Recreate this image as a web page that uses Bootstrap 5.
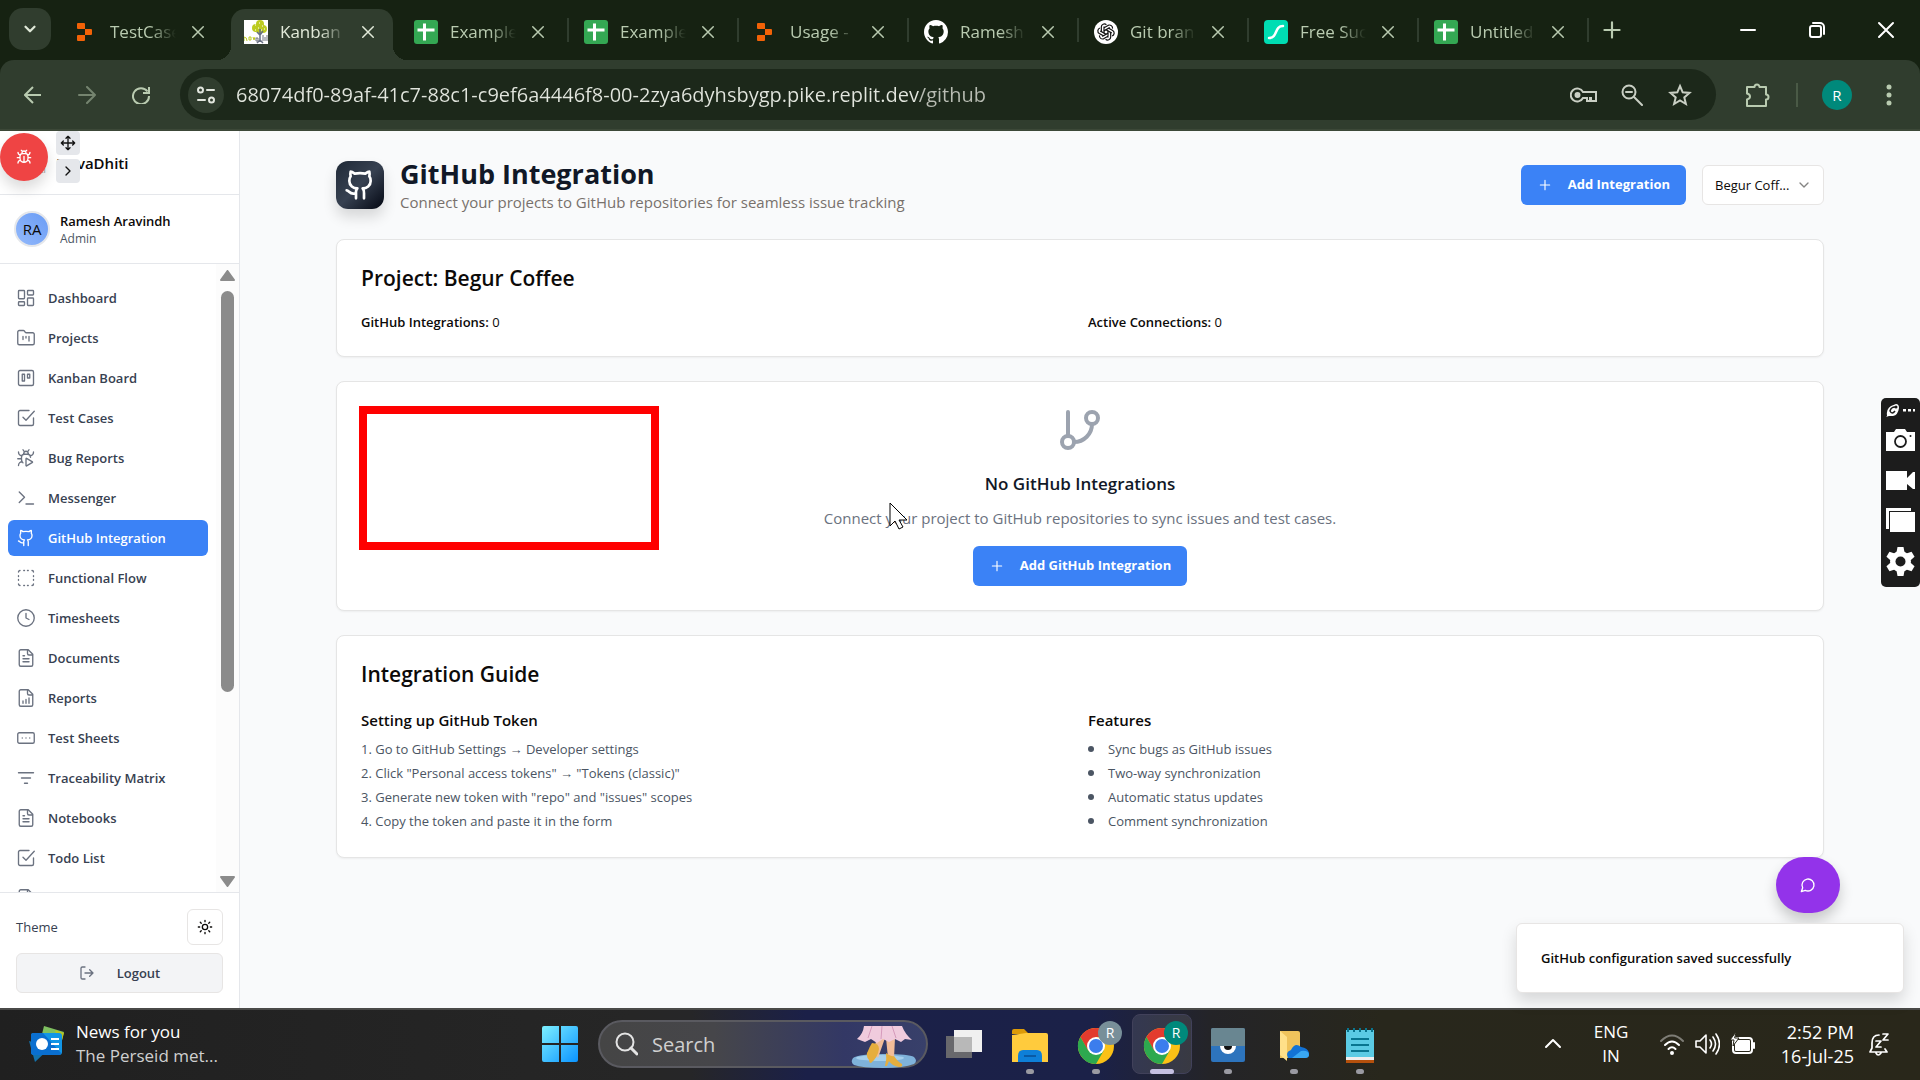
<!DOCTYPE html>
<html lang="en">
<head>
<meta charset="utf-8">
<meta name="viewport" content="width=device-width, initial-scale=1">
<title>GitHub Integration</title>
<link href="https://cdn.jsdelivr.net/npm/bootstrap@5.3.0/dist/css/bootstrap.min.css" rel="stylesheet">
<style>
body{font-family:"Open Sans","Noto Sans",sans-serif;font-size:13px;line-height:20px;color:#0c0a09;background:#f9fafb;overflow:hidden}
a{text-decoration:none;color:inherit}
.ico{width:18px;height:18px;fill:none;stroke:currentColor;stroke-width:2;stroke-linecap:round;stroke-linejoin:round;flex:none;display:block}
.ico-14{width:14px;height:14px}.ico-16{width:16px;height:16px}
.thin{stroke-width:1.7}
.plain{background:none;border:0;padding:0;color:inherit;display:flex;align-items:center;justify-content:center;flex:none}
/* browser frame */
.strip{height:60px;background:#162212;color:#b9cbb0;padding-left:9px}
.tabdrop{width:42px;height:42px;border-radius:14px;background:#303d2e;color:#dfe8d8;margin-right:10px}
.tabitem{width:162px;height:51px;margin:9px 8px 0 0;padding:0 10px 6px 13px;gap:12px;position:relative;font-size:17px}
.tabitem .fav{width:24px;height:24px;flex:none}
.tabitem .ttl{width:66px;flex:none;white-space:nowrap;overflow:hidden;-webkit-mask-image:linear-gradient(90deg,#000 60%,transparent);mask-image:linear-gradient(90deg,#000 60%,transparent);line-height:26px}
.tabitem .plain{margin-left:1px}
.tabitem.on{background:#303d2e;border-radius:14px 14px 0 0;color:#e2ead9}
.tabitem.on::before,.tabitem.on::after{content:"";position:absolute;bottom:0;width:14px;height:14px}
.tabitem.on::before{left:-14px;background:radial-gradient(circle at 0 0,transparent 14px,#303d2e 14px)}
.tabitem.on::after{right:-14px;background:radial-gradient(circle at 100% 0,transparent 14px,#303d2e 14px)}
.tabitem.sep::after{content:"";position:absolute;right:-6px;top:9px;width:2px;height:24px;background:#303d2e}
.winbtn{width:69px;height:60px;color:#fff}
.toolrow{height:71px;background:#303d2e;color:#b9cbb0;border-bottom:2px solid #3c4838;border-radius:14px 14px 0 0;padding:0 6px}
.toolwrap{background:#162212}
.navbtn{width:54px;height:40px}
.omni{height:51px;border-radius:26px;background:#1c281a;padding:0 12px 0 8px;margin-left:12px;color:#c9cfc4}
.omni .site{width:36px;height:36px;border-radius:50%;background:#303d2e;color:#e2e6de}
.omni input{border:0;outline:0;font-size:20px;height:36px;padding:0;color:transparent;background:linear-gradient(90deg,#e2e6de 0 683px,#b9bdb4 683px);-webkit-background-clip:text;background-clip:text}
.who{width:30px;height:30px;border-radius:50%;background:#00897b;color:#fff;font-size:15px}
/* sidebar */
.side{width:240px;background:#fff;border-right:1px solid #e5e7eb;position:relative}
.brand{height:64px;flex:none;border-bottom:1px solid #e5e7eb;padding-left:56px;font-size:15px;font-weight:600}
.person{height:69px;flex:none;border-bottom:1px solid #e5e7eb;padding:0 14px;gap:10px}
.face{width:36px;height:36px;border-radius:50%;border:2px solid #e5e7eb;background:linear-gradient(45deg,#93b9fb,#6a9cf5);font-size:15px}
.menu{padding:16px 8px 0;gap:4px}
.menu a{height:36px;padding:0 9px;gap:13px;border-radius:6px;color:#374151;font-weight:600;flex:none}
.menu a .ico{color:#6b7280;stroke-width:1.8}
.menu a.on,.menu a.on .ico{background:#3b82f6;color:#fff}
.track{width:23px;background:#fcfcfc;padding:11px 0 10px}
.thumb{width:13px;height:401px;border-radius:7px;background:#8b8b8b;margin-top:10px}
.foot{height:116px;flex:none;border-top:1px solid #e5e7eb;padding:16px}
.sunbtn{width:36px;height:36px;border:1px solid #e7e5e4;border-radius:6px;background:#fff;color:#0c0a09}
.outbtn{height:40px;border:1px solid #e7e5e4;border-radius:6px;background:#f3f4f6;color:#374151;gap:22px;font-weight:600}
.outbtn .ico{color:#6b7280}
.bugbtn{position:absolute;left:0;top:2px;width:48px;height:48px;border-radius:50%;background:#ef4444;color:#fff;box-shadow:0 8px 14px rgba(0,0,0,.14);z-index:3}
.floatbtns{position:absolute;left:56px;top:0;gap:4px;z-index:3}
.floatbtns button{width:24px;height:24px;border-radius:4px;background:#e5e7eb;color:#111}
.logomini{position:absolute;left:38px;top:32px;font-size:9px;line-height:14px;color:#999}
/* main column */
.wrapc{max-width:1536px;padding:26px 24px 0;margin:0 auto}
.headrow{margin-bottom:26px}
.headicon{width:48px;height:48px;border-radius:12px;background:linear-gradient(135deg,#1f2937,#374151 50%,#030712);color:#fff;box-shadow:0 8px 14px rgba(0,0,0,.14)}
h1{font-size:27px;line-height:34px;font-weight:700;color:#111827;margin:0}
.sub{font-size:15px;line-height:24px;color:#78716c;margin:0}
.headrow .sub{line-height:22px}
.btn-blue{height:40px;border:0;border-radius:6px;background:#3b82f6;color:#fff;font-size:13px;font-weight:700;padding:0 16px;gap:15px}
.btn-blue:hover{background:#3b82f6;color:#fff}
.pick{width:122px;position:relative}
.pick select{width:100%;height:40px;border:1px solid #e7e5e4;border-radius:6px;background:#fff;padding:0 12px;font-size:13px;appearance:none;color:#0c0a09}
.pick .ico{position:absolute;right:12px;top:12px;color:#858483}
.panel{background:#fff;border:1px solid #e5e5e5;border-radius:8px;padding:24px;box-shadow:0 1px 2px rgba(0,0,0,.05);position:relative}
h2{font-size:21px;line-height:28px;font-weight:600;margin:0}
h3{font-size:15px;line-height:24px;font-weight:600;margin:0}
.half{width:50%;padding-right:8px}
.half+.half{padding:0 0 0 8px}
.steps{color:#4b5563;line-height:24px;margin:5px 0 0;padding:0;list-style:none}
.dots li{display:flex;align-items:center;gap:14px}
.dots li::before{content:"";width:6px;height:6px;border-radius:50%;background:#4b5563}
.redbox{position:absolute;left:22px;top:24px;width:300px;height:144px;border:8px solid #f00}
.pointer{position:absolute;left:552px;top:120px;width:19px;height:28px}
.chat{position:absolute;right:80px;top:726px;width:64px;height:56px;border-radius:28px;background:#9333ea;color:#fff;box-shadow:0 8px 14px rgba(0,0,0,.2)}
.note{position:absolute;right:16px;bottom:15px;width:388px;height:70px;border:1px solid #e7e5e4;border-radius:6px;background:#fff;padding:0 24px;box-shadow:0 8px 16px rgba(0,0,0,.14);font-weight:600}
.rec{position:absolute;right:0;top:267px;width:39px;height:189px;border-radius:5px;background:#1c1c1c}
.rec svg{width:39px;height:189px;display:block}
/* taskbar */
.task{height:72px;border-top:2px solid #4a4a48;padding-bottom:2px;color:#fff;background:linear-gradient(90deg,#202020 0,#262626 33%,#262628 36%,#1b2048 42%,#1b2148 57%,#242428 63%,#28271c 72%,#29271a 100%);font-size:17px;line-height:24px}
.tside{width:542px}
.clocktext{width:98px;font-size:18px}
.find{width:330px;height:48px;border-radius:24px;border:2px solid #5a5a60;background:linear-gradient(90deg,#454545 0,#46464a 35%,#333865 75%,#38406a);margin-left:20px;padding-left:14px;gap:14px;position:relative}
.find input{border:0;outline:0;background:none;color:#d4d4d4;font-size:20px;width:120px;height:32px;padding:0}
.find input::placeholder{color:#d0d0d0;opacity:1}
.find .art{position:absolute;right:8px;top:4px;width:68px;height:42px}
.app{width:66px;height:64px;position:relative}
.app svg{width:60px;height:60px;display:block}
.app::after{content:"";position:absolute;left:29px;bottom:2px;width:8px;height:5px;border-radius:3px;background:#9a9aa2}
.app.nodot::after{display:none}
.app.cur::before{content:"";position:absolute;left:3px;top:2px;width:60px;height:60px;border-radius:8px;border:1px solid #41415a;background:rgba(255,255,255,.1)}
.app.cur svg{position:relative}
.app.cur::after{left:21px;width:24px;background:#c5c0e2}
</style>
</head>
<body class="vh-100 d-flex flex-column">
<svg width="0" height="0" class="position-absolute">
<defs>
<symbol id="x" viewBox="0 0 24 24"><path d="M5 5l14 14M19 5 5 19"/></symbol>
<symbol id="plus" viewBox="0 0 24 24"><path d="M5 12h14M12 5v14"/></symbol>
<symbol id="down" viewBox="0 0 24 24"><path d="m6 9 6 6 6-6"/></symbol>
<symbol id="right" viewBox="0 0 24 24"><path d="m9 18 6-6-6-6"/></symbol>
<symbol id="gh" viewBox="0 0 24 24"><path d="M15 22v-4a4.8 4.8 0 0 0-1-3.5c3 0 6-2 6-5.5.08-1.25-.27-2.48-1-3.5.28-1.15.28-2.35 0-3.5 0 0-1 0-3 1.5-2.64-.5-5.36-.5-8 0C6 2 5 2 5 2c-.3 1.15-.3 2.35 0 3.5A5.403 5.403 0 0 0 4 9c0 3.5 3 5.5 6 5.5-.39.49-.68 1.05-.85 1.65-.17.6-.22 1.23-.15 1.85v4M9 18c-4.51 2-5-2-7-2"/></symbol>
<symbol id="dash" viewBox="0 0 24 24"><rect x="2" y="2" width="8" height="11" rx="1"/><rect x="14" y="2" width="8" height="6" rx="1"/><rect x="14" y="12" width="8" height="10" rx="1"/><rect x="2" y="17" width="8" height="5" rx="1"/></symbol>
<symbol id="folder" viewBox="0 0 24 24"><path d="M3 21h18a2 2 0 0 0 2-2V7a2 2 0 0 0-2-2h-8.500a2 2 0 0 1-1.660-.9l-.82-1.200A2 2 0 0 0 8.360 2H3a2 2 0 0 0-2 2v15c0 1.100.9 2 2 2ZM8 10v4M12 10v2M16 10v6"/></symbol>
<symbol id="board" viewBox="0 0 24 24"><rect x="2" y="2" width="20" height="20" rx="2"/><path d="M7 7h3v9H7zM14 7h3v5h-3z"/></symbol>
<symbol id="check" viewBox="0 0 24 24"><path d="m8 11 4 4L23 3M22 12v8a2 2 0 0 1-2 2H4a2 2 0 0 1-2-2V4a2 2 0 0 1 2-2h12"/></symbol>
<symbol id="bugplay" viewBox="0 0 24 24"><path d="M12.765 22.522a.5.5 0 0 1-.765-.424v-9.196a.5.5 0 0 1 .765-.424l7.878 4.674a1 1 0 0 1 0 .696zM14.12 3.880 16 1M18 11a4 4 0 0 0-4-4h-4a4 4 0 0 0-4 4v3a6.100 6.100 0 0 0 2 4.500M22 4c0 3.100-2.600 4.800-4.500 5M2 22c0-3.100 2.700-4.900 4.800-5M6 13H1M6.530 9C4.600 8.800 2 7.100 2 4M8 1l1.880 2.880M9 7.130v-1a3.003 3.003 0 1 1 6 0v1"/></symbol>
<symbol id="bug" viewBox="0 0 24 24"><path d="m8 2 1.88 1.88M14.12 3.88 16 2M9 7.13v-1a3.003 3.003 0 1 1 6 0v1M12 20c-3.3 0-6-2.7-6-6v-3a4 4 0 0 1 4-4h4a4 4 0 0 1 4 4v3c0 3.3-2.7 6-6 6M12 20v-9M6.53 9C4.6 8.8 3 7.1 3 5M6 13H2M3 21c0-2.1 1.7-3.9 3.8-4M20.97 5c0 2.1-1.6 3.8-3.5 4M22 13h-4M17.2 17c2.1.1 3.8 1.9 3.8 4"/></symbol>
<symbol id="term" viewBox="0 0 24 24"><path d="m3 18 7-7-7-7M12 20h10"/></symbol>
<symbol id="dashed" viewBox="0 0 24 24"><path d="M4 2a2 2 0 0 0-2 2M20 2a2 2 0 0 1 2 2M22 20a2 2 0 0 1-2 2M4 22a2 2 0 0 1-2-2M9 2h1M9 22h1M14 2h1M14 22h1M2 9v1M22 9v1M2 14v1M22 14v1"/></symbol>
<symbol id="clock" viewBox="0 0 24 24"><circle cx="12" cy="12" r="11"/><path d="M12 6v6l4 2"/></symbol>
<symbol id="file" viewBox="0 0 24 24"><path d="M15 1H5a2 2 0 0 0-2 2v18a2 2 0 0 0 2 2h14a2 2 0 0 0 2-2V7ZM14 2v4a2 2 0 0 0 2 2h4M10 9H8M16 13H8M16 17H8"/></symbol>
<symbol id="report" viewBox="0 0 24 24"><path d="M15 1H5a2 2 0 0 0-2 2v18a2 2 0 0 0 2 2h14a2 2 0 0 0 2-2V7ZM14 2v4a2 2 0 0 0 2 2h4M8 19v-3M12 19v-5M16 19v-7"/></symbol>
<symbol id="sheet" viewBox="0 0 24 24"><rect x="1" y="5" width="22" height="14" rx="2"/><path d="M12 12h.01M17 12h.01M7 12h.01"/></symbol>
<symbol id="lines" viewBox="0 0 24 24"><path d="M2 5h20M6 12h12M10 19h4"/></symbol>
<symbol id="sun" viewBox="0 0 24 24"><circle cx="12" cy="12" r="4"/><path d="M12 2v2M12 20v2M4.93 4.93l1.41 1.41M17.66 17.66l1.41 1.41M2 12h2M20 12h2M6.34 17.66l-1.41 1.41M19.07 4.93l-1.41 1.41"/></symbol>
<symbol id="out" viewBox="0 0 24 24"><path d="M9 21H5a2 2 0 0 1-2-2V5a2 2 0 0 1 2-2h4M16 17l5-5-5-5M21 12H9"/></symbol>
<symbol id="move" viewBox="0 0 24 24"><path d="M12 2v20M2 12h20M15 19l-3 3-3-3M19 9l3 3-3 3M5 9l-3 3 3 3M9 5l3-3 3 3"/></symbol>
<symbol id="replit" viewBox="0 0 24 24"><path fill="#f26207" d="M4 3h6a1 1 0 0 1 1 1v5H4a1 1 0 0 1-1-1V4a1 1 0 0 1 1-1zM11 9h6a1 1 0 0 1 1 1v4a1 1 0 0 1-1 1h-6zM4 15h7v5a1 1 0 0 1-1 1H4a1 1 0 0 1-1-1v-4a1 1 0 0 1 1-1z"/></symbol>
<symbol id="gsheet" viewBox="0 0 24 24"><rect width="24" height="24" rx="3" fill="#34a853"/><path d="M3.500 8.500h17v3h-17zM9 3.500h3v17H9z" fill="#fff"/></symbol>
<symbol id="chrome" viewBox="0 0 60 60"><circle cx="30" cy="32" r="18" fill="#fbc116"/><path d="M14.400 23A18 18 0 0 1 45.600 23H30L22 36.500z" fill="#e33b2e"/><path d="M14.400 23A18 18 0 0 0 30 50L37.800 36.500H22.200z" fill="#2da94f"/><circle cx="30" cy="32" r="9" fill="#fff"/><circle cx="30" cy="32" r="7" fill="#3b7ded"/></symbol>
</defs>
</svg>

<header class="flex-shrink-0">
<div class="strip d-flex">
  <button class="plain tabdrop mt-2" aria-label="Search tabs"><svg class="ico" style="stroke-width:3"><use href="#down"/></svg></button>
  <div class="tabitem d-flex align-items-center"><svg class="fav"><use href="#replit"/></svg><span class="ttl">TestCase</span><button class="plain" aria-label="Close"><svg class="ico"><use href="#x"/></svg></button></div>
  <div class="tabitem on d-flex align-items-center"><svg class="fav" viewBox="0 0 24 24"><path fill="#fff" d="M0 0h24v24H0z"/><g fill="#bccb20"><circle cx="16" cy="4" r="4"/><circle cx="12" cy="8" r="4"/><circle cx="19" cy="9" r="4"/><circle cx="15" cy="9" r="4"/></g><path d="M11 5h1M15 3h1M18 6h1M14 8h1M20 9h1M11 10h1M17 10h1" stroke="#fff"/><path d="M16 9v13M13 12l3 3 3-4M13 23l3-3 3 3" stroke="#666f82" stroke-width="1.500" fill="none"/><path d="M0 17v4M0 17q3 0 3 4M5 17h2v3H5zM9 17l1 3 1-3" stroke="#bccb20" fill="none"/><path d="M12 18h2v3h-2zM19 15v6M21 17v4M23 15v6" stroke="#707580" fill="none"/></svg><span class="ttl">Kanban</span><button class="plain" aria-label="Close"><svg class="ico"><use href="#x"/></svg></button></div>
  <div class="tabitem sep d-flex align-items-center"><svg class="fav"><use href="#gsheet"/></svg><span class="ttl">Example</span><button class="plain" aria-label="Close"><svg class="ico"><use href="#x"/></svg></button></div>
  <div class="tabitem sep d-flex align-items-center"><svg class="fav"><use href="#gsheet"/></svg><span class="ttl">Example</span><button class="plain" aria-label="Close"><svg class="ico"><use href="#x"/></svg></button></div>
  <div class="tabitem sep d-flex align-items-center"><svg class="fav"><use href="#replit"/></svg><span class="ttl">Usage -</span><button class="plain" aria-label="Close"><svg class="ico"><use href="#x"/></svg></button></div>
  <div class="tabitem sep d-flex align-items-center"><svg class="fav" viewBox="0 0 16 16"><path fill="#fff" d="M8 0C3.580 0 0 3.580 0 8c0 3.540 2.290 6.530 5.470 7.590.4.070.55-.17.55-.38 0-.19-.01-.82-.01-1.490-2.010.37-2.530-.49-2.690-.94-.09-.23-.48-.94-.82-1.130-.28-.15-.68-.52-.01-.53.63-.01 1.080.58 1.230.82.72 1.210 1.870.87 2.330.66.07-.52.28-.87.51-1.070-1.780-.2-3.640-.89-3.640-3.950 0-.87.31-1.590.82-2.150-.08-.2-.36-1.020.08-2.120 0 0 .67-.21 2.200.82.64-.18 1.320-.27 2-.27s1.360.09 2 .27c1.530-1.040 2.200-.82 2.200-.82.44 1.100.16 1.920.08 2.120.51.56.82 1.270.82 2.150 0 3.070-1.870 3.750-3.650 3.950.29.25.54.73.54 1.480 0 1.070-.01 1.930-.01 2.200 0 .21.15.46.55.38A8.010 8.010 0 0 0 16 8c0-4.420-3.580-8-8-8"/></svg><span class="ttl">Ramesh</span><button class="plain" aria-label="Close"><svg class="ico"><use href="#x"/></svg></button></div>
  <div class="tabitem sep d-flex align-items-center"><svg class="fav" viewBox="0 0 24 24"><circle cx="12" cy="12" r="12" fill="#fff"/><g fill="none" stroke="#111" stroke-width="1.200"><path id="knot" d="M10 13.200V7.800L14 5.400a3.100 3.100 0 0 1 4.500 3.300M10 7.800V6.500"/><use href="#knot" transform="rotate(60 12 12)"/><use href="#knot" transform="rotate(120 12 12)"/><use href="#knot" transform="rotate(180 12 12)"/><use href="#knot" transform="rotate(240 12 12)"/><use href="#knot" transform="rotate(300 12 12)"/></g></svg><span class="ttl">Git bran</span><button class="plain" aria-label="Close"><svg class="ico"><use href="#x"/></svg></button></div>
  <div class="tabitem sep d-flex align-items-center"><svg class="fav" viewBox="0 0 24 24"><rect width="24" height="24" rx="4" fill="#00ddb3"/><path d="M5 18c9 0 5-12 14-12" fill="none" stroke="#fff" stroke-width="2.500" stroke-linecap="round"/></svg><span class="ttl">Free Suc</span><button class="plain" aria-label="Close"><svg class="ico"><use href="#x"/></svg></button></div>
  <div class="tabitem sep d-flex align-items-center"><svg class="fav"><use href="#gsheet"/></svg><span class="ttl">Untitled</span><button class="plain" aria-label="Close"><svg class="ico"><use href="#x"/></svg></button></div>
  <button class="plain ms-2" aria-label="New tab"><svg class="ico" style="width:26px;height:26px"><use href="#plus"/></svg></button>
  <div class="d-flex ms-auto">
    <button class="plain winbtn" aria-label="Minimize"><svg class="ico" viewBox="0 0 18 18"><path d="M2 9h14"/></svg></button>
    <button class="plain winbtn" aria-label="Restore"><svg class="ico" viewBox="0 0 18 18"><rect x="2" y="5" width="11" height="11" rx="2"/><path d="M5 2h7a4 4 0 0 1 4 4v7"/></svg></button>
    <button class="plain winbtn" aria-label="Close window"><svg class="ico" viewBox="0 0 18 18"><path d="m2 2 14 14M16 2 2 16"/></svg></button>
  </div>
</div>
<div class="toolwrap">
<div class="toolrow d-flex align-items-center">
  <button class="plain navbtn" aria-label="Back"><svg class="ico" viewBox="0 0 18 18"><path d="M17 9H1M9 1 1 9l8 8" stroke-linecap="butt" stroke-linejoin="miter"/></svg></button>
  <button class="plain navbtn opacity-50" aria-label="Forward"><svg class="ico" viewBox="0 0 18 18"><path d="M1 9h16M9 1l8 8-8 8"/></svg></button>
  <button class="plain navbtn" aria-label="Reload"><svg class="ico" viewBox="0 0 18 18"><path d="M15.500 5.500A8 8 0 1 0 17 10M17 1v6h-6" stroke-linecap="butt" stroke-linejoin="miter"/></svg></button>
  <div class="omni d-flex align-items-center flex-grow-1">
    <button class="plain site me-2" aria-label="Site information"><svg class="ico" viewBox="0 0 18 18"><circle cx="3.500" cy="4" r="2.500"/><path d="M10 4h7M1 14h7"/><circle cx="14.500" cy="14" r="2.500"/></svg></button>
    <input class="flex-grow-1 ms-1" aria-label="Address" value="68074df0-89af-41c7-88c1-c9ef6a4446f8-00-2zya6dyhsbygp.pike.replit.dev/github">
    <button class="plain" style="width:48px" aria-label="Passwords"><svg class="ico" style="width:28px;height:20px" viewBox="0 0 28 20"><path d="M13 7a6.500 6.500 0 1 0 0 6h4v3h3v-3h1v3h5V7z" stroke-linejoin="miter"/><circle cx="7.500" cy="10" r="2" fill="currentColor"/></svg></button>
    <button class="plain" style="width:48px" aria-label="Zoom"><svg class="ico" style="width:22px;height:22px" viewBox="0 0 22 22"><circle cx="8" cy="8" r="6.500"/><path d="m13 13 8 8M5 8h6"/></svg></button>
    <button class="plain" style="width:48px" aria-label="Bookmark"><svg class="ico" style="width:24px;height:24px" viewBox="0 0 24 24"><path d="m12 3 2.700 6.300 6.800.6-5.200 4.500 1.600 6.600-5.900-3.500L6.100 21l1.600-6.600L2.500 9.900l6.800-.6z" stroke-linejoin="miter"/></svg></button>
  </div>
  <button class="plain ms-4 ps-1" aria-label="Extensions"><svg class="ico" style="width:28px;height:28px" viewBox="0 0 28 28"><path d="M3 6h7.500a2.500 2.500 0 0 1 5 0H22v7.500a2.500 2.500 0 0 1 0 5V25H3v-6.500c4-1 4-5 0-6z" stroke-linejoin="round"/></svg></button>
  <span class="ms-4" style="width:2px;height:24px;background:#4a5a46"></span>
  <button class="plain who ms-4" aria-label="Profile">R</button>
  <button class="plain navbtn ms-2 ps-1" aria-label="Menu"><svg width="6" height="24" viewBox="0 0 6 24" fill="currentColor"><circle cx="3" cy="4" r="2.500"/><circle cx="3" cy="12" r="2.500"/><circle cx="3" cy="20" r="2.500"/></svg></button>
</div>
</div>
</header>

<div class="d-flex flex-grow-1 position-relative" style="min-height:0">
<aside class="side d-flex flex-column flex-shrink-0">
  <span class="logomini">iti</span>
  <button class="plain bugbtn" aria-label="Report a bug"><svg class="ico ico-16"><use href="#bug"/></svg></button>
  <div class="floatbtns d-flex flex-column"><button class="plain" aria-label="Move"><svg class="ico ico-16"><use href="#move"/></svg></button><button class="plain" aria-label="Expand"><svg class="ico ico-16"><use href="#right"/></svg></button></div>
  <div class="brand d-flex align-items-center">NovaDhiti</div>
  <div class="person d-flex align-items-center">
    <div class="face d-flex align-items-center justify-content-center">RA</div>
    <div><div class="fw-semibold">Ramesh Aravindh</div><div style="font-size:12px;line-height:16px;color:#4b5563">Admin</div></div>
  </div>
  <div class="d-flex flex-grow-1 overflow-hidden">
    <nav class="menu d-flex flex-column flex-grow-1">
      <a href="#" class="d-flex align-items-center"><svg class="ico"><use href="#dash"/></svg>Dashboard</a>
      <a href="#" class="d-flex align-items-center"><svg class="ico"><use href="#folder"/></svg>Projects</a>
      <a href="#" class="d-flex align-items-center"><svg class="ico"><use href="#board"/></svg>Kanban Board</a>
      <a href="#" class="d-flex align-items-center"><svg class="ico"><use href="#check"/></svg>Test Cases</a>
      <a href="#" class="d-flex align-items-center"><svg class="ico"><use href="#bugplay"/></svg>Bug Reports</a>
      <a href="#" class="d-flex align-items-center"><svg class="ico"><use href="#term"/></svg>Messenger</a>
      <a href="#" class="on d-flex align-items-center"><svg class="ico"><use href="#gh"/></svg>GitHub Integration</a>
      <a href="#" class="d-flex align-items-center"><svg class="ico"><use href="#dashed"/></svg>Functional Flow</a>
      <a href="#" class="d-flex align-items-center"><svg class="ico"><use href="#clock"/></svg>Timesheets</a>
      <a href="#" class="d-flex align-items-center"><svg class="ico"><use href="#file"/></svg>Documents</a>
      <a href="#" class="d-flex align-items-center"><svg class="ico"><use href="#report"/></svg>Reports</a>
      <a href="#" class="d-flex align-items-center"><svg class="ico"><use href="#sheet"/></svg>Test Sheets</a>
      <a href="#" class="d-flex align-items-center"><svg class="ico"><use href="#lines"/></svg>Traceability Matrix</a>
      <a href="#" class="d-flex align-items-center"><svg class="ico"><use href="#file"/></svg>Notebooks</a>
      <a href="#" class="d-flex align-items-center"><svg class="ico"><use href="#check"/></svg>Todo List</a>
      <a href="#" class="d-flex align-items-center" aria-label="More files"><svg class="ico"><use href="#file"/></svg></a>
    </nav>
    <div class="track d-flex flex-column align-items-center">
      <svg class="flex-shrink-0" width="15" height="11" style="margin-top:-5px" viewBox="0 0 15 11"><path d="M7.500 1 14 10H1z" fill="#8b8b8b" stroke="#8b8b8b" stroke-width="2" stroke-linejoin="round"/></svg>
      <div class="thumb flex-shrink-0"></div>
      <svg class="mt-auto flex-shrink-0" width="15" height="11" style="margin-bottom:-5px" viewBox="0 0 15 11"><path d="M7.500 10 14 1H1z" fill="#8b8b8b" stroke="#8b8b8b" stroke-width="2" stroke-linejoin="round"/></svg>
    </div>
  </div>
  <div class="foot">
    <div class="d-flex align-items-center justify-content-between mb-2" style="color:#374151"><span>Theme</span><button class="plain sunbtn" aria-label="Toggle theme"><svg class="ico ico-16"><use href="#sun"/></svg></button></div>
    <button class="plain outbtn w-100"><svg class="ico ico-16"><use href="#out"/></svg>Logout</button>
  </div>
</aside>

<main class="flex-grow-1">
  <div class="wrapc d-flex flex-column">
    <div class="headrow d-flex align-items-center justify-content-between">
      <div class="d-flex align-items-center gap-3">
        <div class="headicon d-flex align-items-center justify-content-center"><svg class="ico" style="width:32px;height:32px"><use href="#gh"/></svg></div>
        <div><h1>GitHub Integration</h1><p class="sub">Connect your projects to GitHub repositories for seamless issue tracking</p></div>
      </div>
      <div class="d-flex gap-3">
        <button class="btn btn-blue d-flex align-items-center"><svg class="ico ico-16 thin"><use href="#plus"/></svg>Add Integration</button>
        <div class="pick"><select aria-label="Project"><option>Begur Coff...</option></select><svg class="ico ico-16"><use href="#down"/></svg></div>
      </div>
    </div>
    <section class="panel mb-4">
      <h2>Project: Begur Coffee</h2>
      <div class="d-flex" style="margin-top:20px"><div class="half"><b class="fw-semibold">GitHub Integrations:</b> 0</div><div class="half"><b class="fw-semibold">Active Connections:</b> 0</div></div>
    </section>
    <section class="panel mb-4 text-center d-flex flex-column align-items-center">
      <svg class="ico" style="width:48px;height:48px;color:#9ca3af" viewBox="0 0 24 24"><path d="M6 3v12M18 9a9 9 0 0 1-9 9"/><circle cx="18" cy="6" r="3"/><circle cx="6" cy="18" r="3"/></svg>
      <h3 class="mt-3" style="font-size:17px;line-height:28px;color:#111827">No GitHub Integrations</h3>
      <p class="sub mt-2" style="color:#6b7280">Connect your project to GitHub repositories to sync issues and test cases.</p>
      <button class="btn btn-blue mt-3 d-flex align-items-center"><svg class="ico ico-16 thin"><use href="#plus"/></svg>Add GitHub Integration</button>
      <div class="redbox"></div>
      <svg class="pointer" viewBox="0 0 19 28"><path d="M1 1v23l5-5 4 8 4-2-4-7h8z" fill="#fff" stroke="#000"/></svg>
    </section>
    <section class="panel">
      <h2>Integration Guide</h2>
      <div class="d-flex" style="margin-top:20px">
        <div class="half"><h3>Setting up GitHub Token</h3><ol class="steps"><li>1. Go to GitHub Settings → Developer settings</li><li>2. Click "Personal access tokens" → "Tokens (classic)"</li><li>3. Generate new token with "repo" and "issues" scopes</li><li>4. Copy the token and paste it in the form</li></ol></div>
        <div class="half"><h3>Features</h3><ul class="steps dots"><li>Sync bugs as GitHub issues</li><li>Two-way synchronization</li><li>Automatic status updates</li><li>Comment synchronization</li></ul></div>
      </div>
    </section>
  </div>
</main>
<button class="plain chat" aria-label="Open chat"><svg class="ico ico-16"><path transform="scale(.667)" d="M7.900 20A9 9 0 1 0 4 16.100L2 22Z"/></svg></button>
<div class="note d-flex align-items-center" role="status">GitHub configuration saved successfully</div>
<div class="rec"><svg viewBox="0 0 39 189" fill="#fff">
<path d="M6 18q-1-7 4-10l5-2q3 0 3 4-1 7-6 8H8l-3 1z"/><path d="M14 9q-4 0-5 4 2 4 5 0" fill="none" stroke="#1c1c1c" stroke-width="1.500"/><circle cx="15" cy="9" r="1.500" fill="#1c1c1c"/>
<path d="M22 11h3v2.500h-3zM27 11h3v2.500h-3zM32 11h2v2.500h-2z"/>
<path d="M5 34h8l2-3h9l2 3h8v19H5z"/><circle cx="19.500" cy="43.500" r="5.500" fill="none" stroke="#1c1c1c" stroke-width="1.800"/><circle cx="29.500" cy="38" r="1" fill="#1c1c1c"/>
<path d="M5 73h21v7l6-6h2v17h-2l-6-5v6H5z"/>
<path d="M5 110h25v3H8v18H5zM9 114h25v20H9z"/>
<g transform="translate(19.500 163.500)"><circle r="10.500"/><g><path id="tt" d="M-4-9-3-14.500h6L4-9z"/><use href="#tt" transform="rotate(60)"/><use href="#tt" transform="rotate(120)"/><use href="#tt" transform="rotate(180)"/><use href="#tt" transform="rotate(240)"/><use href="#tt" transform="rotate(300)"/></g><circle r="5" fill="#1c1c1c"/></g>
</svg></div>
</div>

<footer class="task d-flex align-items-center flex-shrink-0">
  <a href="#" class="tside d-flex align-items-center flex-shrink-0" style="padding-left:28px;gap:10px">
    <svg width="38" height="38" viewBox="0 0 38 38"><path d="M16 1l20 6-4 16-20-6z" fill="#7fc060"/><path d="M27 5l9 3-4 15z" fill="#b8c420"/><path d="M1 16l22 6-16 15z" fill="#1272ad"/><rect x="3" y="8" width="31" height="22" rx="3" fill="#1296e6"/><path d="M5 8h10l18 20-1 2H6q-3 0-3-3V10q0-2 2-2z" fill="#0a6fd0"/><circle cx="14" cy="19" r="6" fill="#fff"/><path d="M23 14h8M23 19h8M23 24h8" stroke="#fff" stroke-width="2"/></svg>
    <span>News for you<br><span style="color:#cfcfcf">The Perseid met...</span></span>
  </a>
  <button class="plain" aria-label="Start"><svg width="36" height="36" viewBox="0 0 36 36"><defs><linearGradient id="win" x2="1" y2="1"><stop stop-color="#7df0ff"/><stop offset="1" stop-color="#0a93ff"/></linearGradient></defs><path fill="url(#win)" d="M2 0h15v17H0V2q0-2 2-2zM19 0h15q2 0 2 2v15H19zM0 19h17v17H2q-2 0-2-2zM19 19h17v15q0 2-2 2H19z"/></svg></button>
  <div class="find d-flex align-items-center flex-shrink-0">
    <svg class="ico" style="width:24px;height:24px;color:#e4e4e4" viewBox="0 0 24 24"><circle cx="11" cy="10" r="8.500"/><path d="m17 16 6 6" stroke-width="3"/></svg>
    <input type="search" aria-label="Search" placeholder="Search">
    <svg class="art" viewBox="0 0 68 42"><path d="M3 32q6-4 31-4t30 3q4 4 0 7-10 4-31 4T4 39q-4-3-1-7z" fill="#7fb2da"/><ellipse cx="30" cy="32" rx="24" ry="3" fill="#a5cfec"/><path d="M27 12h8l-7 20-5-6zM36 12h9l-1 20h-6z" fill="#f2bd98"/><path d="M22 17q7 0 7 6-1 8-8 14-2 0-2-3-4-5-1-9 2-5 4-8z" fill="#e6ae3e"/><path d="M36 27q6 4 8 3 4 6 8 8 1 3-3 3-7-1-10-6l-2 5h-2q2-7 1-13z" fill="#e6ae3e"/><path d="M14 0h38q3 8 10 14l-7-1-4 3-6-3-6 3-6-3-6 4-6-4-6 3-8-3q6-5 7-13z" fill="#f0cbdd"/><path d="M22 0l-4 12M32 0l-1 13M42 0l4 12" stroke="#d59abb"/></svg>
  </div>
  <div class="d-flex align-items-center" style="margin-left:3px">
  <button class="plain app nodot" aria-label="Task view"><svg viewBox="0 0 60 60"><path d="M12 22h26v22H12z" fill="#68686c"/><path d="M20 16h28v22H20z" fill="#f0f0f0"/><path d="M20 23h18v15H20z" fill="#b8b8b8"/></svg></button>
  <button class="plain app" aria-label="File Explorer"><svg viewBox="0 0 60 60"><path d="M12 17q0-2 2-2h10l5 5H12z" fill="#dc9a08"/><path d="M12 21l14-2h20q2 0 2 2v27H12z" fill="#ffcb3d"/><path d="M18 48V42q0-6 5-6h14q5 0 5 6v6z" fill="#0e7fd8"/><path d="M24 42h12" stroke="#095aa5" stroke-width="2"/></svg></button>
  <button class="plain app" aria-label="Chrome, profile one"><svg viewBox="0 0 60 60"><use href="#chrome"/><circle cx="44" cy="19" r="12" fill="#788f99"/><text x="44" y="24" text-anchor="middle" font-size="14" fill="#fff">R</text></svg></button>
  <button class="plain app cur" aria-label="Chrome, profile two"><svg viewBox="0 0 60 60"><use href="#chrome"/><circle cx="44" cy="19" r="12" fill="#00897b"/><text x="44" y="24" text-anchor="middle" font-size="14" fill="#fff">R</text></svg></button>
  <button class="plain app" aria-label="Screen recorder"><svg viewBox="0 0 60 60"><rect x="13" y="14" width="34" height="34" rx="2" fill="#2d74bd"/><path d="M13 16q0-2 2-2h30q2 0 2 2v16H13z" fill="#698691"/><path d="M22 32h16a8 8 0 0 1-16 0z" fill="#fff"/><path d="M26 32h8a4 4 0 0 1-8 0z" fill="#111"/></svg></button>
  <button class="plain app" aria-label="OneDrive folder"><svg viewBox="0 0 60 60"><path d="M16 17h18q2 0 2 2v25H16z" fill="#efc35c"/><path d="M16 17l7 6v24l-7-6z" fill="#ffe089"/><path d="M24 44q-3-6 3-8 4-8 10-3 7 1 8 6 0 5-4 5z" fill="#1273d6"/><path d="M28 44l9-7q8-1 8 4 0 3-4 3z" fill="#39a7f2"/></svg></button>
  <button class="plain app" aria-label="Notepad"><svg viewBox="0 0 60 60"><path d="M16 16h28v28H16z" fill="#5bcbe4"/><path d="M16 43h28v3H16z" fill="#eee"/><path d="M16 46h28v3H16z" fill="#b4500c"/><path d="M18 14v4M24 14v4M30 14v4M36 14v4M42 14v4M21 25h18M21 31h18M21 37h18" stroke="#08758f" stroke-width="2"/></svg></button>
  </div>
  <div class="d-flex align-items-center ms-auto" style="padding-right:30px">
    <button class="plain" aria-label="Hidden icons"><svg class="ico" viewBox="0 0 18 18"><path d="m2 12 7-7 7 7"/></svg></button>
    <div class="text-center" style="width:96px;padding-left:2px">ENG<br>IN</div>
    <button class="plain gap-2" aria-label="Network, sound and battery">
      <svg class="ico" style="width:28px;height:26px" viewBox="0 0 28 26"><path d="M3 10q11-11 22 0" opacity=".4"/><path d="M7 14q7-7 14 0M10.500 18q3.500-3.500 7 0"/><circle cx="14" cy="22" r="1"/></svg>
      <svg class="ico" style="width:26px;height:26px" viewBox="0 0 26 26"><path d="M2 10h4l6-6v18l-6-6H2zM16 9q3 4 0 8M19 6q5 7 0 14M22 3q7 10 0 20" stroke-width="1.600"/></svg>
      <svg class="ico" style="width:28px;height:26px" viewBox="0 0 28 26"><rect x="5" y="7" width="19" height="15" rx="3"/><rect x="8" y="10" width="13" height="9" fill="#fff"/><path d="M26 12v5"/><path d="M8 1 2 9h4l-1 6 6-8H7z" fill="#fff" stroke="#28271a" stroke-width="1"/></svg>
    </button>
    <div class="clocktext text-end">2:52 PM<br>16-Jul-25</div>
    <button class="plain" style="margin-left:14px" aria-label="Notifications"><svg class="ico" style="width:22px;height:26px" viewBox="0 0 22 26"><path d="M11 4q-7 0-7 8v5l-2 4h17l-2-3M8 22q2 4 5 0M8 10h5l-5 6h5M15 3h5l-5 6h5" stroke-width="1.700"/></svg></button>
  </div>
</footer>
<script src="https://cdn.jsdelivr.net/npm/bootstrap@5.3.0/dist/js/bootstrap.bundle.min.js"></script>
</body>
</html>
